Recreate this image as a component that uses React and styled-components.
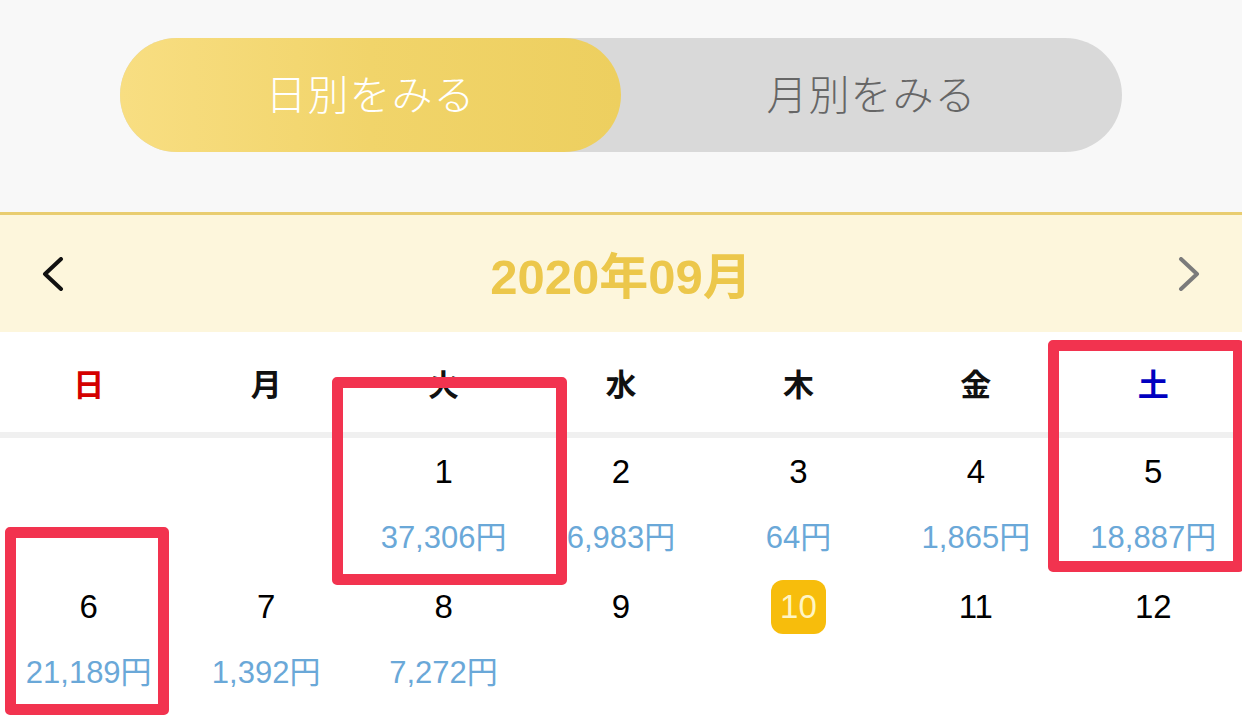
import React from "react";
import styled, { createGlobalStyle } from "styled-components";

const GlobalStyle = createGlobalStyle`
  html, body {
    margin: 0;
    padding: 0;
    background: #fff;
  }
  body {
    font-family: "Liberation Sans", "Noto Sans CJK JP", sans-serif;
  }
`;

const WEEKDAYS = ["日", "月", "火", "水", "木", "金", "土"];

// September 2020, first two weeks (starts on a Tuesday)
const WEEKS = [
  [null, null, { day: 1, amount: "37,306円" }, { day: 2, amount: "6,983円" }, { day: 3, amount: "64円" }, { day: 4, amount: "1,865円" }, { day: 5, amount: "18,887円" }],
  [{ day: 6, amount: "21,189円" }, { day: 7, amount: "1,392円" }, { day: 8, amount: "7,272円" }, { day: 9 }, { day: 10, today: true }, { day: 11 }, { day: 12 }],
];

const MARKS = [
  { left: 332, top: 377, width: 235, height: 208 },
  { left: 1048, top: 340, width: 196, height: 232 },
  { left: 5, top: 527, width: 164, height: 188 },
];

function App() {
  return (
    <Page>
      <GlobalStyle />
      <TopArea>
        <Toggle>
          <ToggleButton active>日別をみる</ToggleButton>
          <ToggleButton>月別をみる</ToggleButton>
        </Toggle>
      </TopArea>

      <MonthBar>
        <NavButton aria-label="prev">
          <svg width="22" height="34" viewBox="0 0 22 34">
            <polyline points="19,2 3,17 19,32" fill="none" stroke="#111" strokeWidth="4" strokeLinecap="round" strokeLinejoin="round" />
          </svg>
        </NavButton>
        <MonthTitle>2020年09月</MonthTitle>
        <NavButton aria-label="next">
          <svg width="22" height="34" viewBox="0 0 22 34">
            <polyline points="3,2 19,17 3,32" fill="none" stroke="#7b7b7b" strokeWidth="4" strokeLinecap="round" strokeLinejoin="round" />
          </svg>
        </NavButton>
      </MonthBar>

      <WeekHeader>
        {WEEKDAYS.map((w, i) => (
          <WeekLabel key={w} tone={i === 0 ? "sun" : i === 6 ? "sat" : "day"}>
            {w}
          </WeekLabel>
        ))}
      </WeekHeader>

      {WEEKS.map((week, wi) => (
        <WeekRow key={wi}>
          {week.map((cell, ci) => (
            <DayCell key={ci}>
              {cell && (
                <>
                  <DayNumber today={cell.today}>{cell.day}</DayNumber>
                  <Amount>{cell.amount || ""}</Amount>
                </>
              )}
            </DayCell>
          ))}
        </WeekRow>
      ))}

      {MARKS.map((m, i) => (
        <Mark key={i} style={{ left: m.left, top: m.top, width: m.width, height: m.height }} />
      ))}
    </Page>
  );
}

const Page = styled.div`
  position: relative;
  width: 1242px;
  min-height: 721px;
  overflow: hidden;
  background: #fff;
`;

const TopArea = styled.div`
  background: #f8f8f8;
  padding: 38px 120px 60px;
`;

const Toggle = styled.div`
  display: flex;
  height: 114px;
  border-radius: 57px;
  background: #d9d9d9;
`;

const ToggleButton = styled.div`
  flex: 1;
  display: flex;
  align-items: center;
  justify-content: center;
  padding-bottom: 6px;
  border-radius: 57px;
  font-family: "Noto Sans CJK JP", sans-serif;
  font-weight: 300;
  font-size: 41px;
  letter-spacing: 1px;
  color: ${(p) => (p.active ? "#fff" : "#666")};
  background: ${(p) =>
    p.active ? "linear-gradient(90deg, #f8de82 0%, #f1d46a 50%, #edcf5f 100%)" : "transparent"};
`;

const MonthBar = styled.div`
  display: flex;
  align-items: center;
  justify-content: space-between;
  height: 117px;
  padding: 0 42px;
  background: #fdf6dc;
  border-top: 3px solid #e9cd70;
`;

const NavButton = styled.div`
  display: flex;
  align-items: center;
  width: 22px;
  height: 34px;
`;

const MonthTitle = styled.div`
  font-family: "Liberation Sans", "Noto Sans CJK JP", sans-serif;
  font-weight: 700;
  font-size: 49px;
  color: #ecc74b;
  margin-bottom: 2px;
`;

const WeekHeader = styled.div`
  display: grid;
  grid-template-columns: repeat(7, 1fr);
  height: 100px;
  border-bottom: 6px solid #f0f0f0;
`;

const WeekLabel = styled.div`
  display: flex;
  align-items: center;
  justify-content: center;
  font-family: "Noto Sans CJK JP", sans-serif;
  font-weight: 700;
  font-size: 31px;
  color: ${(p) => (p.tone === "sun" ? "#d40000" : p.tone === "sat" ? "#0000c0" : "#111")};
`;

const WeekRow = styled.div`
  display: grid;
  grid-template-columns: repeat(7, 1fr);
  height: 135px;
`;

const DayCell = styled.div`
  display: flex;
  flex-direction: column;
  align-items: center;
  padding-top: 7px;
`;

const DayNumber = styled.div`
  display: flex;
  align-items: center;
  justify-content: center;
  height: 54px;
  min-width: 55px;
  border-radius: 12px;
  font-size: 33px;
  color: ${(p) => (p.today ? "#fff5c4" : "#000")};
  background: ${(p) => (p.today ? "#f7bd0c" : "transparent")};
`;

const Amount = styled.div`
  margin-top: 19px;
  height: 40px;
  line-height: 40px;
  font-size: 31px;
  color: #6aa8d8;
  white-space: nowrap;
`;

const Mark = styled.div`
  position: absolute;
  box-sizing: border-box;
  border: 11px solid #f2334f;
  border-radius: 5px;
  pointer-events: none;
`;

export default App;
